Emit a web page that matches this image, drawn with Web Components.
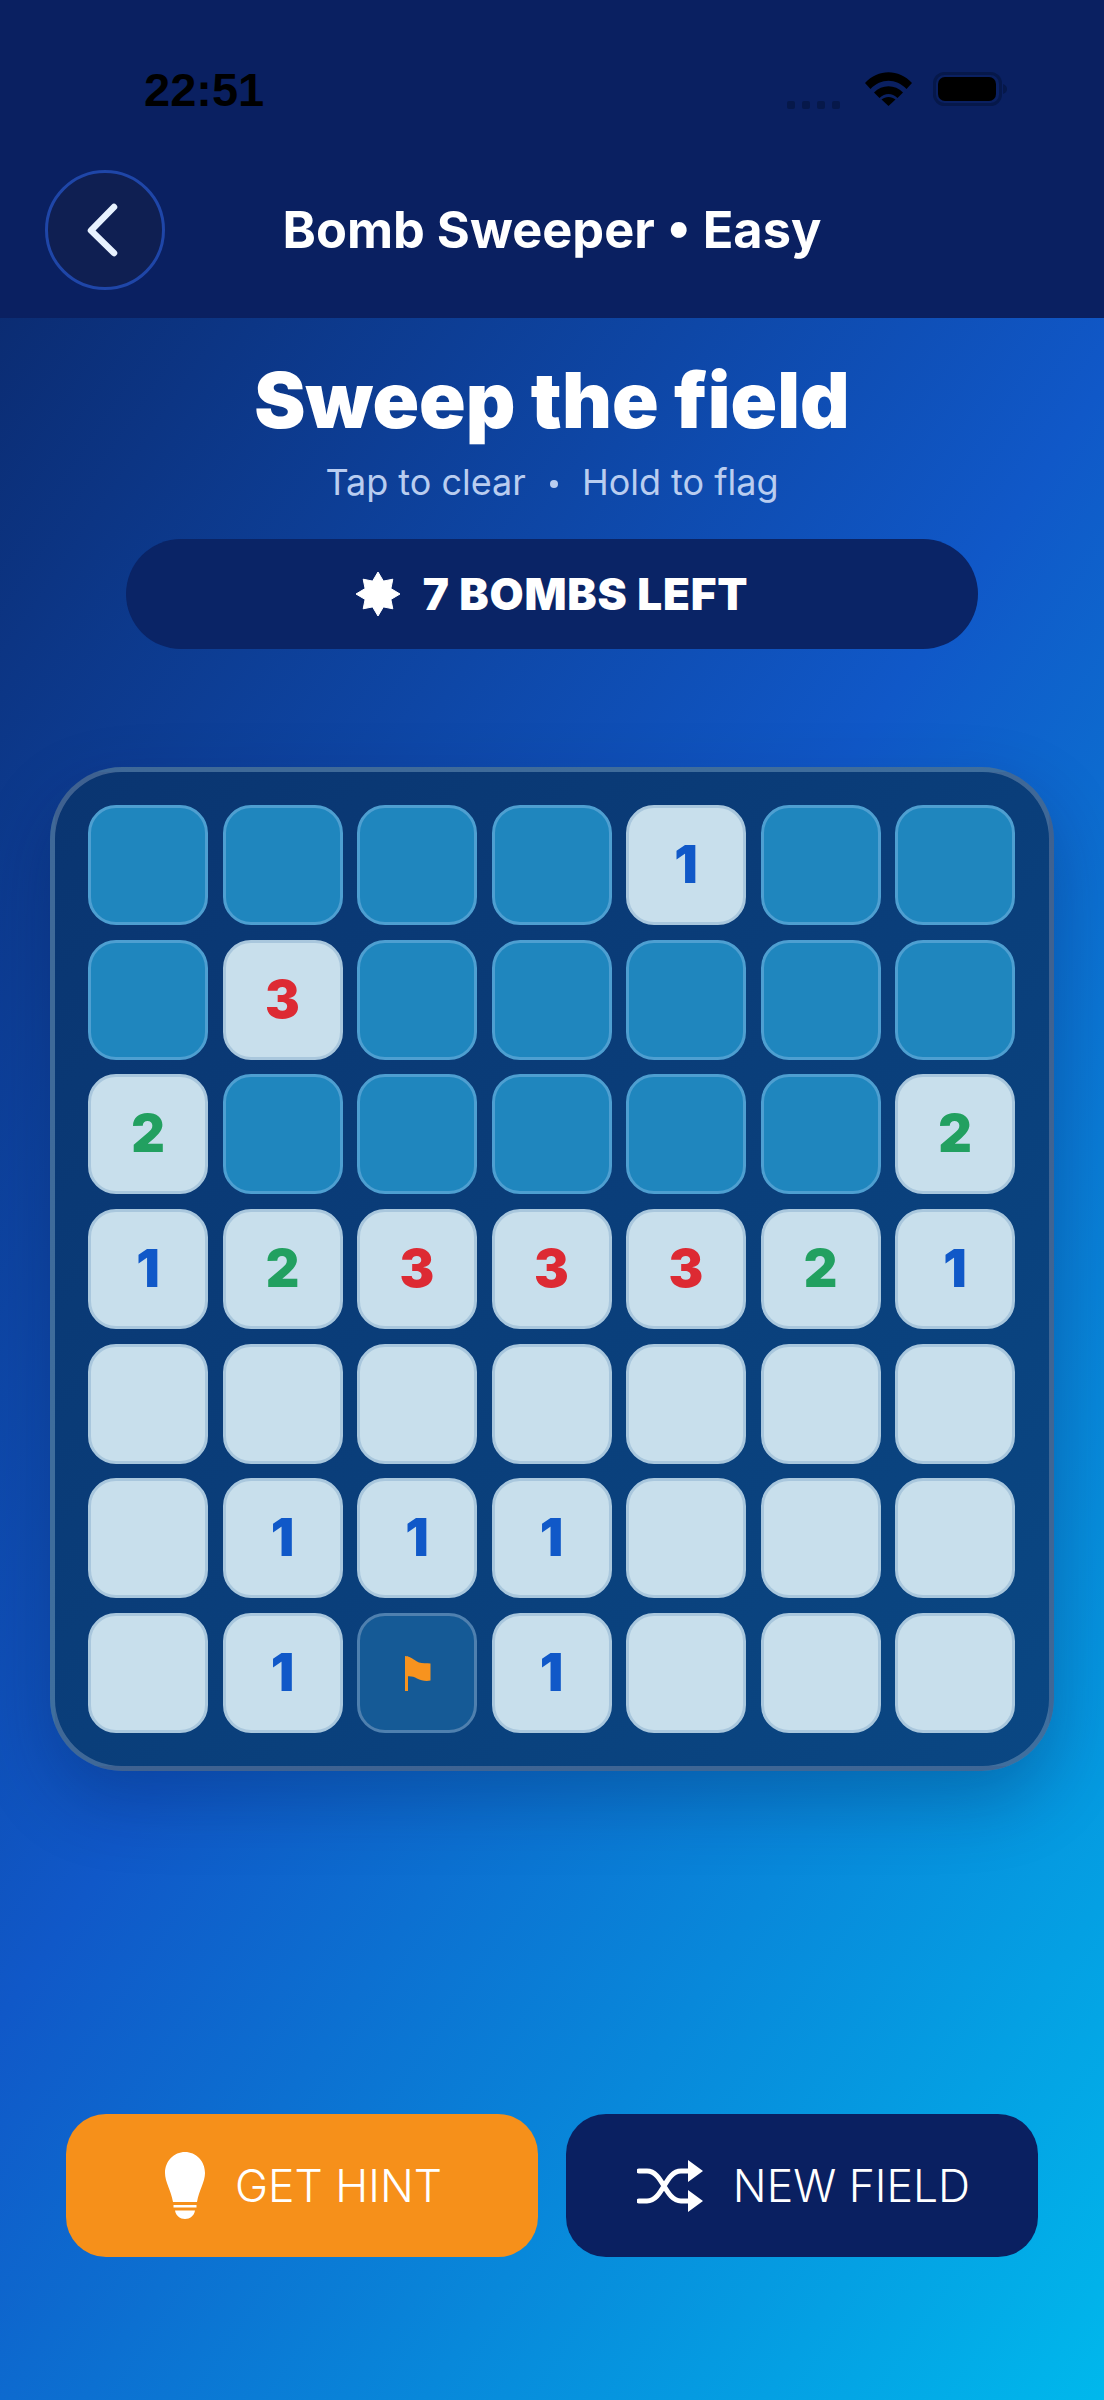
<!DOCTYPE html>
<html lang="en">
<head>
<meta charset="utf-8">
<title>Bomb Sweeper</title>
<style>
html,body{margin:0;padding:0;height:2400px;overflow:hidden;background:#0a2463}
</style>
</head>
<body>
<game-screen>
  <status-bar slot="top" time="22:51"></status-bar>
  <nav-header slot="top" title-text="Bomb Sweeper • Easy"></nav-header>
  <h-block heading="Sweep the field" left="Tap to clear" right="Hold to flag"></h-block>
  <bomb-pill>7 BOMBS LEFT</bomb-pill>
  <mine-board rows="hhhh1hh|h3hhhhh|2hhhhh2|1233321|eeeeeee|e111eee|e1F1eee"></mine-board>
  <action-row>
    <action-button kind="hint" icon="bulb">GET HINT</action-button>
    <action-button kind="new" icon="shuffle">NEW FIELD</action-button>
  </action-row>
</game-screen>
<script>
const FONT = 'Inter, "Liberation Sans", sans-serif';
function shadow(el, html){ el.attachShadow({mode:'open'}).innerHTML = html; }

customElements.define('game-screen', class extends HTMLElement{
  constructor(){super();shadow(this,`<style>
    :host{display:block;width:1104px;height:2400px;overflow:hidden;font-family:${FONT};color:#fff;
      background:linear-gradient(124deg,#0a2463 0%,#1058c8 50%,#00b8ec 100%);}
    .top{display:block;background:#0a2061;height:318px}
    .main{display:flex;flex-direction:column;align-items:center}
  </style><div class="top"><slot name="top"></slot></div><div class="main"><slot></slot></div>`);}
});

customElements.define('status-bar', class extends HTMLElement{
  constructor(){super();shadow(this,`<style>
    :host{display:flex;align-items:flex-start;justify-content:space-between;height:150px;box-sizing:border-box;padding:64px 97px 0 144px}
    .t{font:700 47px/52px "Liberation Sans",sans-serif;color:#000}
    .r{display:flex;align-items:flex-start;padding-top:8px;gap:21px}
    .dots{display:flex;gap:7px;margin-top:29px;margin-right:4px}
    .dots i{display:block;width:8px;height:8px;border-radius:2px;background:#06184a}
    svg{display:block}
  </style><div class="t"></div><div class="r">
    <div class="dots"><i></i><i></i><i></i><i></i></div>
    <svg width="47" height="34" viewBox="0 0 47 34"><path d="M0 11 C13 -3.500 34 -3.500 47 11 L41.500 17 C31 6 16 6 5.500 17Z" fill="#000"/><path d="M9 20.500 C17 12 30 12 38 20.500 L32.500 26 C27 20.500 20 20.500 14.500 26Z" fill="#000"/><path d="M16.500 27.500 C20.500 24 26.500 24 30.500 27.500 L23.500 34Z" fill="#000"/></svg>
    <svg width="74" height="34" viewBox="0 0 74 34"><rect x="1.500" y="1.500" width="66" height="31" rx="10" fill="none" stroke="#06184a" stroke-width="3"/><rect x="5" y="5" width="58" height="24" rx="7" fill="#000"/><path d="M70 12 C73 13 74 15 74 17 C74 19 73 21 70 22Z" fill="#06184a"/></svg>
  </div>`);
  this.shadowRoot.querySelector('.t').textContent=this.getAttribute('time');}
});

customElements.define('nav-header', class extends HTMLElement{
  constructor(){super();shadow(this,`<style>
    :host{display:grid;grid-template-columns:1fr auto 1fr;align-items:center;height:168px;box-sizing:border-box;padding:0 45px 8px 45px}
    button{all:unset;display:flex;align-items:center;justify-content:center;width:120px;height:120px;box-sizing:border-box;border-radius:50%;background:#0f1f52;border:3px solid #1f46a8}
    .t{font:700 50.500px/60px ${FONT};color:#fff;white-space:nowrap;}
    svg{display:block}
  </style><div><button aria-label="Back"><svg width="40" height="56" viewBox="0 0 40 56"><path d="M29 5 L6 28.500 L29 51" fill="none" stroke="#e8f2ff" stroke-width="6.500" stroke-linecap="round" stroke-linejoin="round"/></svg></button></div><div class="t"></div><div></div>`);
  this.shadowRoot.querySelector('.t').textContent=this.getAttribute('title-text');}
});

customElements.define('h-block', class extends HTMLElement{
  constructor(){super();shadow(this,`<style>
    :host{display:flex;flex-direction:column;align-items:center;padding-top:38px}
    h1{margin:0;font:900 77px/88px ${FONT};color:#fff}
    p{margin:16px 0 0;font:400 36px/44px ${FONT};color:#b9cdf0;display:flex;align-items:center;gap:24px}
    i{display:block;width:8px;height:8px;border-radius:50%;background:#b9cdf0;margin-top:4px}
  </style><h1></h1><p><span class="a"></span><i></i><span class="b"></span></p>`);
  const s=this.shadowRoot;
  s.querySelector('h1').textContent=this.getAttribute('heading');
  s.querySelector('.a').textContent=this.getAttribute('left');
  s.querySelector('.b').textContent=this.getAttribute('right');}
});

customElements.define('bomb-pill', class extends HTMLElement{
  constructor(){super();shadow(this,`<style>
    :host{display:flex;align-items:center;justify-content:center;gap:23px;width:852px;height:110px;margin-top:35px;border-radius:55px;background:#0a2466;color:#fff;font:900 44px/52px ${FONT};letter-spacing:.8px}
    svg{display:block}
  </style><svg width="44" height="44" viewBox="0 0 44 44"><path d="M22 0 L27.400 9.100 L36.800 7.200 L34.900 16.600 L44 22 L34.900 27.400 L36.800 36.800 L27.400 34.900 L22 44 L16.600 34.900 L7.200 36.800 L9.100 27.400 L0 22 L9.100 16.600 L7.200 7.200 L16.600 9.100Z" fill="#fff" stroke="#fff" stroke-width="1" stroke-linejoin="round"/></svg><span><slot></slot></span>`);}
});

customElements.define('mine-cell', class extends HTMLElement{
  constructor(){super();shadow(this,`<style>
    :host{display:flex;align-items:center;justify-content:center;width:120px;height:120px;box-sizing:border-box;border-radius:28px;border:3px solid;font:900 52px/60px ${FONT}}
    :host([state=h]){background:#1f86be;border-color:#4e9fd1}
    :host([state=e]),:host([state=n]){background:#c8dfec;border-color:#a9c7dd}
    :host([state=f]){background:#155a96;border-color:#4f80af}
    :host([n="1"]){color:#1058c8}
    :host([n="2"]){color:#22a060}
    :host([n="3"]){color:#dd2a33}
    svg{display:none;margin:1px 0 0 0}
    :host([state=f]) svg{display:block}
  </style><slot></slot><svg width="27" height="35" viewBox="0 0 27 35"><path d="M1 0 L4 0.500 L4 35 L1 35Z" fill="#f7931e"/><path d="M3 0.500 C8 1 11 5 15 6.500 C18 7.500 23 7 26.500 7.500 L26.500 24.500 C22 25.500 17 24.500 13 22.500 C10 21 7 20 3 20.500Z" fill="#f7931e"/></svg>`);}
});

customElements.define('mine-board', class extends HTMLElement{
  constructor(){super();shadow(this,`<style>
    :host{display:grid;grid-template-columns:repeat(7,120px);gap:14.500px;width:1004px;height:1004px;box-sizing:border-box;margin-top:118px;padding:33px;border:5px solid rgba(255,255,255,.22);border-radius:72px;background:linear-gradient(135deg,#0a3571,#0a4783);box-shadow:0 30px 70px rgba(4,20,70,.28)}
  </style><slot></slot>`);}
  connectedCallback(){
    if(this.children.length)return;
    for(const row of this.getAttribute('rows').split('|')){
      for(const c of row){
        const el=document.createElement('mine-cell');
        if(c==='h')el.setAttribute('state','h');
        else if(c==='e')el.setAttribute('state','e');
        else if(c==='F')el.setAttribute('state','f');
        else{el.setAttribute('state','n');el.setAttribute('n',c);el.textContent=c;}
        this.appendChild(el);
      }
    }
  }
});

customElements.define('action-row', class extends HTMLElement{
  constructor(){super();shadow(this,`<style>
    :host{display:grid;grid-template-columns:472px 472px;gap:28px;margin-top:343px}
  </style><slot></slot>`);}
});

const ICONS={
 bulb:`<svg width="40" height="67" viewBox="0 0 40 67"><path d="M20 0 C31 0 40 9 40 21 C40 30 34 38 32 50 L8 50 C6 38 0 30 0 21 C0 9 9 0 20 0Z" fill="#fff"/><rect x="8.500" y="53" width="23" height="2.500" fill="#fff"/><path d="M10 58.500 H30 C29 64 25 67 20 67 C15 67 11 64 10 58.500Z" fill="#fff"/></svg>`,
 shuffle:`<svg width="66" height="52" viewBox="0 0 66 52"><path d="M2 11 H10 C26 11 28 41 44 41 H54 M2 41 H10 C26 41 28 11 44 11 H54" fill="none" stroke="#fff" stroke-width="5" stroke-linecap="round"/><path d="M51 0 L66 11 L51 22Z M51 30 L66 41 L51 52Z" fill="#fff"/></svg>`
};
customElements.define('action-button', class extends HTMLElement{
  constructor(){super();shadow(this,`<style>
    :host{display:flex;align-items:center;justify-content:center;height:143px;box-sizing:border-box;padding-left:3px;border-radius:40px;font:300 44.500px/54px ${FONT};color:#fff;gap:30px}
    :host([kind=hint]){background:#f6901a}
    :host([kind=new]){background:#0a2061}
    svg{display:block}
  </style>${ICONS[this.getAttribute('icon')]}<span><slot></slot></span>`);}
});
</script>
</body>
</html>
